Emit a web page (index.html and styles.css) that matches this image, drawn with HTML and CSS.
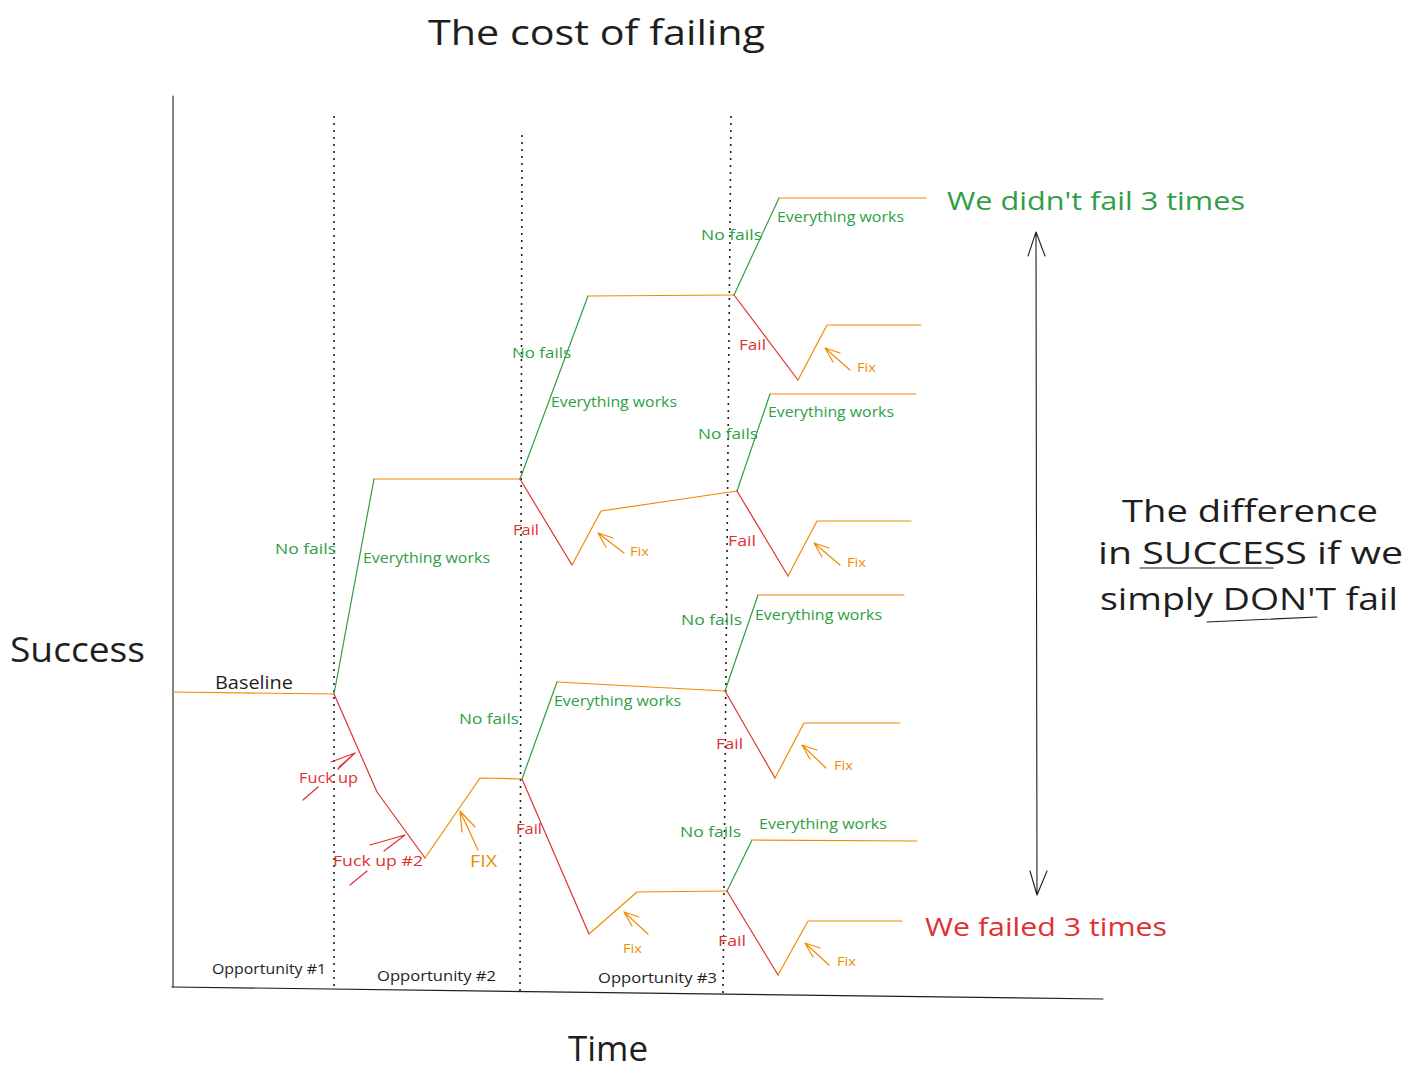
FILE: index.html
```html
<!DOCTYPE html>
<html lang="en">
<head>
<meta charset="utf-8">
<title>The cost of failing</title>
<link rel="stylesheet" href="styles.css">
</head>
<body>
<div class="canvas">
<svg class="diagram" width="1422" height="1080" viewBox="0 0 1422 1080" xmlns="http://www.w3.org/2000/svg">
  <!-- axes -->
  <path class="axis" d="M173 96 L173 987"/>
  <path class="axis" d="M172 987 L1103 999"/>
  <!-- opportunity separators -->
  <path class="dots" d="M334 116 L334 990"/>
  <path class="dots" d="M522 135 L520 992"/>
  <path class="dots" d="M731 116 L723 997"/>

  <!-- baseline -->
  <path class="ln o" d="M173 692 L334 694"/>
  <!-- opportunity 1 -->
  <path class="ln g" d="M334 694 L374 479"/>
  <path class="ln o" d="M374 479 L520 479"/>
  <path class="ln r" d="M334 694 L377 792 L425 858"/>
  <path class="ln o" d="M425 858 L480 778 L522 779"/>
  <!-- opportunity 2 upper -->
  <path class="ln g" d="M520 479 L588 296"/>
  <path class="ln o" d="M588 296 L734 295"/>
  <path class="ln r" d="M520 479 L572 565"/>
  <path class="ln o" d="M572 565 L601 511 L737 491"/>
  <!-- opportunity 2 lower -->
  <path class="ln g" d="M522 779 L557 682"/>
  <path class="ln o" d="M557 682 L725 691"/>
  <path class="ln r" d="M522 779 L589 934"/>
  <path class="ln o" d="M589 934 L637 892 L727 891"/>
  <!-- opportunity 3 -->
  <path class="ln g" d="M734 295 L779 198"/>
  <path class="ln o" d="M779 198 L926 198"/>
  <path class="ln r" d="M734 295 L798 380"/>
  <path class="ln o" d="M798 380 L827 325 L921 325"/>

  <path class="ln g" d="M737 491 L770 394"/>
  <path class="ln o" d="M770 394 L916 394"/>
  <path class="ln r" d="M737 491 L788 576"/>
  <path class="ln o" d="M788 576 L817 521 L911 521"/>

  <path class="ln g" d="M725 691 L758 595"/>
  <path class="ln o" d="M758 595 L904 595"/>
  <path class="ln r" d="M725 691 L775 778"/>
  <path class="ln o" d="M775 778 L804 723 L900 723"/>

  <path class="ln g" d="M727 891 L752 840"/>
  <path class="ln o" d="M752 840 L917 841"/>
  <path class="ln r" d="M727 891 L778 975"/>
  <path class="ln o" d="M778 975 L808 921 L902 921"/>

  <!-- annotation arrows -->
  <path class="ln r" d="M303 800 L318 787 M338 769 L355 753 M331 762 L355 753 L339 767"/>
  <path class="ln r" d="M350 885 L367 871 M388 848 L405 835 M370 845 L405 835 L384 851"/>
  <path class="ln o" d="M478 850 L460 811 M462 832 L460 811 L475 827"/>
  <path class="ln o" d="M598 533 L624 553 M613 538 L598 533 L606 547"/>
  <path class="ln o" d="M825 348 L850 370 M840 353 L825 348 L833 362"/>
  <path class="ln o" d="M814 543 L840 565 M829 548 L814 543 L822 557"/>
  <path class="ln o" d="M802 745 L826 768 M817 750 L802 745 L810 759"/>
  <path class="ln o" d="M624 912 L648 934 M639 917 L624 912 L632 926"/>
  <path class="ln o" d="M805 943 L829 965 M820 948 L805 943 L813 957"/>

  <!-- difference arrow -->
  <path class="axis" d="M1036 232 L1037 895 M1028 256 L1036 232 L1045 256 M1030 871 L1037 895 L1047 871"/>
  <path class="axis" d="M1140 568 L1273 568 M1207 622 L1317 617"/>

  <!-- texts -->
  <text class="tx big" x="428" y="31" textLength="337" lengthAdjust="spacingAndGlyphs">The cost of failing</text>
  <text class="tx big" x="10" y="648" textLength="135" lengthAdjust="spacingAndGlyphs">Success</text>
  <text class="tx big" x="568" y="1047" textLength="80" lengthAdjust="spacingAndGlyphs">Time</text>
  <text class="tx stmt green" x="947" y="200" textLength="298" lengthAdjust="spacingAndGlyphs">We didn't fail 3 times</text>
  <text class="tx stmt red" x="925" y="926" textLength="242" lengthAdjust="spacingAndGlyphs">We failed 3 times</text>
  <text class="tx diff" x="1122" y="510" textLength="256" lengthAdjust="spacingAndGlyphs">The difference</text>
  <text class="tx diff" x="1098" y="552" textLength="305" lengthAdjust="spacingAndGlyphs">in SUCCESS if we</text>
  <text class="tx diff" x="1100" y="598" textLength="298" lengthAdjust="spacingAndGlyphs">simply DON'T fail</text>

  <text class="tx base" x="215" y="682" textLength="78" lengthAdjust="spacingAndGlyphs">Baseline</text>
  <text class="tx opp" x="212" y="968" textLength="114" lengthAdjust="spacingAndGlyphs">Opportunity #1</text>
  <text class="tx opp" x="377" y="975" textLength="119" lengthAdjust="spacingAndGlyphs">Opportunity #2</text>
  <text class="tx opp" x="598" y="977" textLength="119" lengthAdjust="spacingAndGlyphs">Opportunity #3</text>

  <text class="tx lbl red" x="299" y="777" textLength="59" lengthAdjust="spacingAndGlyphs">Fuck up</text>
  <text class="tx lbl red" x="333" y="860" textLength="90" lengthAdjust="spacingAndGlyphs">Fuck up #2</text>
  <text class="tx fixbig" x="470" y="861" textLength="27" lengthAdjust="spacingAndGlyphs">FIX</text>

  <text class="tx lbl green" x="275" y="548" textLength="61" lengthAdjust="spacingAndGlyphs">No fails</text>
  <text class="tx lbl green" x="363" y="557" textLength="127" lengthAdjust="spacingAndGlyphs">Everything works</text>
  <text class="tx lbl green" x="459" y="718" textLength="60" lengthAdjust="spacingAndGlyphs">No fails</text>
  <text class="tx lbl green" x="512" y="352" textLength="59" lengthAdjust="spacingAndGlyphs">No fails</text>
  <text class="tx lbl green" x="551" y="401" textLength="126" lengthAdjust="spacingAndGlyphs">Everything works</text>
  <text class="tx lbl green" x="554" y="700" textLength="127" lengthAdjust="spacingAndGlyphs">Everything works</text>
  <text class="tx lbl green" x="701" y="234" textLength="61" lengthAdjust="spacingAndGlyphs">No fails</text>
  <text class="tx lbl green" x="777" y="216" textLength="127" lengthAdjust="spacingAndGlyphs">Everything works</text>
  <text class="tx lbl green" x="698" y="433" textLength="60" lengthAdjust="spacingAndGlyphs">No fails</text>
  <text class="tx lbl green" x="768" y="411" textLength="126" lengthAdjust="spacingAndGlyphs">Everything works</text>
  <text class="tx lbl green" x="681" y="619" textLength="61" lengthAdjust="spacingAndGlyphs">No fails</text>
  <text class="tx lbl green" x="755" y="614" textLength="127" lengthAdjust="spacingAndGlyphs">Everything works</text>
  <text class="tx lbl green" x="680" y="831" textLength="61" lengthAdjust="spacingAndGlyphs">No fails</text>
  <text class="tx lbl green" x="759" y="823" textLength="128" lengthAdjust="spacingAndGlyphs">Everything works</text>

  <text class="tx fail" x="513" y="529" textLength="26" lengthAdjust="spacingAndGlyphs">Fail</text>
  <text class="tx fail" x="516" y="828" textLength="26" lengthAdjust="spacingAndGlyphs">Fail</text>
  <text class="tx fail" x="739" y="344" textLength="27" lengthAdjust="spacingAndGlyphs">Fail</text>
  <text class="tx fail" x="728" y="540" textLength="28" lengthAdjust="spacingAndGlyphs">Fail</text>
  <text class="tx fail" x="716" y="743" textLength="27" lengthAdjust="spacingAndGlyphs">Fail</text>
  <text class="tx fail" x="718" y="940" textLength="28" lengthAdjust="spacingAndGlyphs">Fail</text>

  <text class="tx fix" x="630" y="551" textLength="19" lengthAdjust="spacingAndGlyphs">Fix</text>
  <text class="tx fix" x="857" y="367" textLength="19" lengthAdjust="spacingAndGlyphs">Fix</text>
  <text class="tx fix" x="847" y="562" textLength="19" lengthAdjust="spacingAndGlyphs">Fix</text>
  <text class="tx fix" x="834" y="765" textLength="19" lengthAdjust="spacingAndGlyphs">Fix</text>
  <text class="tx fix" x="623" y="948" textLength="19" lengthAdjust="spacingAndGlyphs">Fix</text>
  <text class="tx fix" x="837" y="961" textLength="19" lengthAdjust="spacingAndGlyphs">Fix</text>
</svg>
</div>
</body>
</html>
```
FILE: styles.css
```css
html, body {
  margin: 0;
  padding: 0;
  background: #ffffff;
}

.canvas {
  width: 1422px;
  height: 1080px;
  overflow: hidden;
}

.diagram {
  display: block;
}

.axis {
  fill: none;
  stroke: #1e1e1e;
  stroke-width: 1.1;
  stroke-linecap: round;
  stroke-linejoin: round;
}

.dots {
  fill: none;
  stroke: #1e1e1e;
  stroke-width: 1.6;
  stroke-dasharray: 2 5;
}

.ln {
  fill: none;
  stroke-width: 1.2;
  stroke-linecap: round;
  stroke-linejoin: round;
}
.ln.o { stroke: #f08c00; }
.ln.g { stroke: #2f9e44; }
.ln.r { stroke: #e03131; }

.tx {
  font-family: "Open Sans", "DejaVu Sans", sans-serif;
  dominant-baseline: central;
  fill: #1e1e1e;
}

.tx.green { fill: #2f9e44; }
.tx.red { fill: #e03131; }

.big { font-size: 35px; }
.stmt { font-size: 26px; }
.diff { font-size: 31px; }
.base { font-size: 19px; }
.opp { font-size: 15px; }
.lbl { font-size: 14px; }
.fail { font-size: 14px; fill: #e03131; }
.fix { font-size: 12px; fill: #f08c00; }
.fixbig { font-size: 16px; fill: #f08c00; }
```
